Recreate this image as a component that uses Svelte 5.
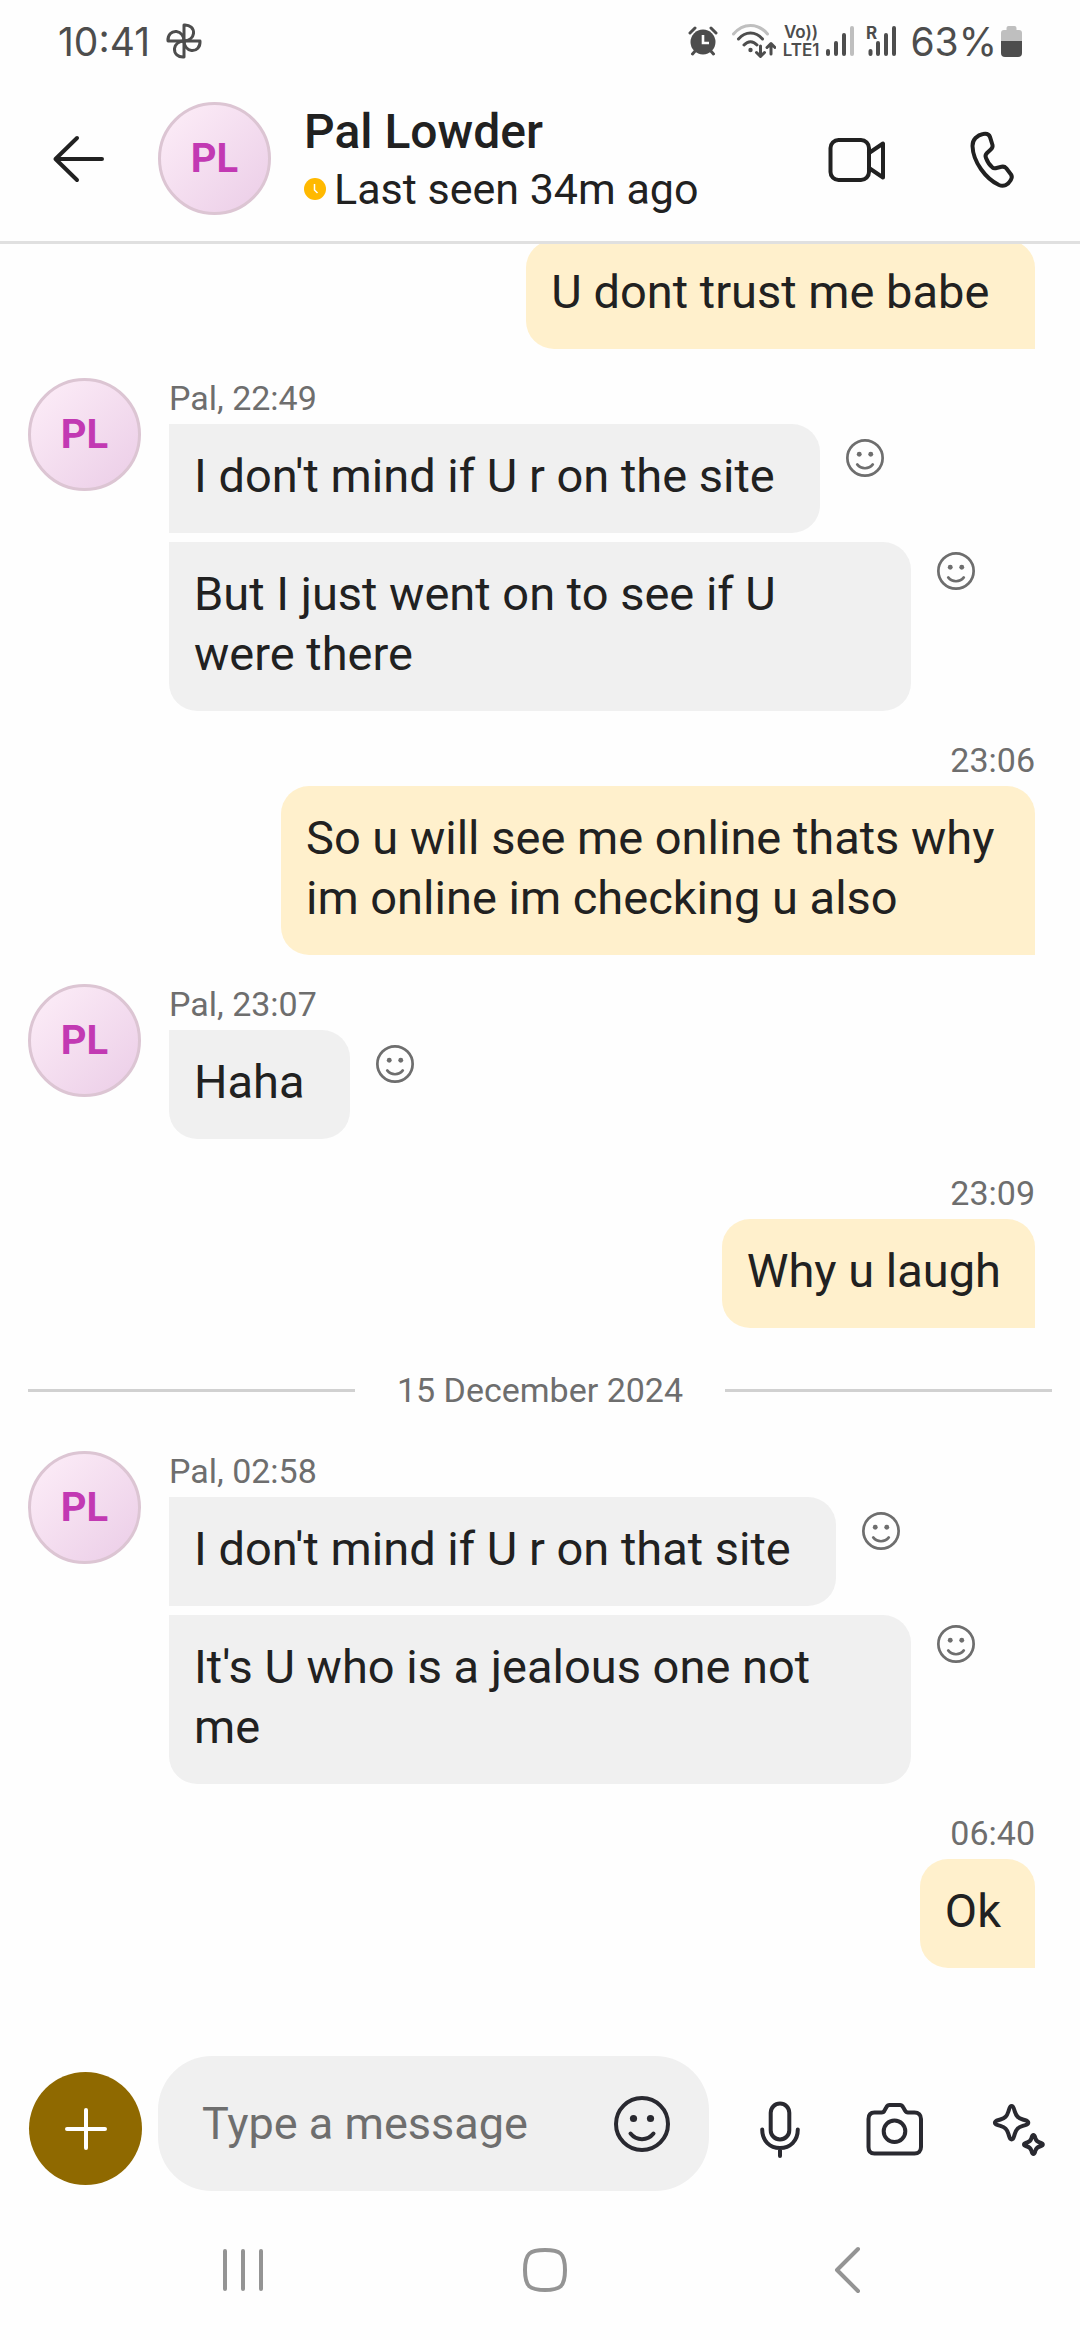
<script>
  let draft = $state('')

  const contact = { name: 'Pal Lowder', initials: 'PL', seen: 'Last seen 34m ago' }

  // '\u00a0' keeps the trailing space people typed
  const thread = [
    { type: 'sent', messages: ['U dont trust me babe\u00a0'] },
    {
      type: 'received',
      meta: 'Pal, 22:49',
      messages: ['I don\'t mind if U r on the site\u00a0', 'But I just went on to see if U were there'],
    },
    { type: 'sent', meta: '23:06', messages: ['So u will see me online thats why im online im checking u also'] },
    { type: 'received', meta: 'Pal, 23:07', messages: ['Haha\u00a0'] },
    { type: 'sent', meta: '23:09', messages: ['Why u laugh'] },
    { type: 'date', label: '15 December 2024' },
    {
      type: 'received',
      meta: 'Pal, 02:58',
      messages: ['I don\'t mind if U r on that site\u00a0', 'It\'s U who is a jealous one not me\u00a0'],
    },
    { type: 'sent', meta: '06:40', messages: ['Ok'] },
  ]
</script>

{#snippet avatar()}
  <div class="avatar">{contact.initials}</div>
{/snippet}

{#snippet smiley(size)}
  <svg class="line" width={size} height={size} viewBox="0 0 56 56">
    <circle cx="28" cy="28" r="26" />
    <path d="M16.5 37.5c6 7.5 17 7.5 23 0" />
    <circle class="dot" cx="19.5" cy="22.5" r="3.6" />
    <circle class="dot" cx="36.5" cy="22.5" r="3.6" />
  </svg>
{/snippet}

<div class="screen">
  <div class="status">
    <span>10:41</span>
    <svg class="line thin" width="36" height="36" viewBox="0 0 36 36">
      <path d="M18 18V2c6-.5 10 3.500 9.500 8.500C27 15 23 18 18 18Z" />
      <path d="M18 18h16c.5 6-3.500 10-8.500 9.500C21 27 18 23 18 18Z" />
      <path d="M18 18v16c-6 .5-10-3.500-9.500-8.500C9 21 13 18 18 18Z" />
      <path d="M18 18H2C1.500 12 5.500 8 10.500 8.500 15 9 18 13 18 18Z" />
    </svg>

    <div class="indicators">
      <svg width="30" height="30" viewBox="0 0 30 30">
        <circle cx="15" cy="16" r="12.500" fill="currentColor" />
        <path d="M2 7l5-5M28 7l-5-5M4.500 28l4-4.500M25.500 28l-4-4.500" stroke="currentColor" stroke-width="3" stroke-linecap="round" />
        <path d="M15 9v8h6" fill="none" stroke="#fff" stroke-width="2.600" />
      </svg>
      <svg class="line thin wifi" width="44" height="36" viewBox="0 0 44 36">
        <path class="faded" d="M1.500 11C11-.5 26-.5 35.500 11" />
        <path d="M6.500 16c7-8 17-8 24 0M12 22c4-4.500 9-4.500 13 0" />
        <circle class="dot" cx="18.500" cy="27" r="2.200" />
        <path d="M28.500 23v10m-4-3.500 4 4 4-4M39 31V21m-4 3.500 4-4 4 4" />
      </svg>
      <div class="volte"><span>Vo))</span><span>LTE1</span></div>
      <svg class="bars" width="28" height="32" viewBox="0 0 28 32">
        <path d="M2 26v3M10 18v11M18 10v19" />
        <path class="faded" d="M26 3v26" />
      </svg>
      <svg class="bars" width="30" height="44" viewBox="0 -6 30 44">
        <text x="0" y="14">R</text>
        <path d="M4.500 26v3M12 18v11M20 10v19M28 3v26" />
      </svg>
      <span class="percent">63%</span>
      <svg width="21" height="32" viewBox="0 0 21 32">
        <path fill="#bfbfbf" d="M0 16V8q0-3 3-3h2.500V3q0-2 2-2h6q2 0 2 2v2H18q3 0 3 3v8Z" />
        <path fill="currentColor" d="M0 16h21v12q0 4-4 4H4q-4 0-4-4Z" />
      </svg>
    </div>
  </div>

  <header>
    <button aria-label="Back">
      <svg class="line" width="68" height="68" viewBox="0 0 68 68">
        <path d="M32 13 10.500 34 32 55M10.500 34H57" />
      </svg>
    </button>
    {@render avatar()}
    <div class="who">
      <h1>{contact.name}</h1>
      <p>
        <svg width="22" height="22" viewBox="0 0 22 22">
          <circle cx="11" cy="11" r="11" fill="#ffb900" />
          <path d="M10.500 6v6l3 3" fill="none" stroke="#fff" stroke-width="1.500" />
        </svg>
        {contact.seen}
      </p>
    </div>
    <div class="calls">
      <button aria-label="Video call">
        <svg class="line" width="68" height="68" viewBox="0 0 68 68">
          <rect x="7.500" y="15" width="38.500" height="40" rx="8" />
          <path d="M46 28l14-9.500v34L46 43" />
        </svg>
      </button>
      <button aria-label="Call">
        <svg class="line" width="68" height="68" viewBox="0 0 68 68">
          <path
            d="M17.500 13C19.500 11 22 9.500 25 9c3.500-.7 6 0 7 3l2.500 8c.5 2-.5 3.500-2 4.800L29 28c-1.500 1.500-2 3-1 5 1.500 4 4 7.500 6.500 9.500 1 1 2.500 1 4 .5l5-1.200c2-.5 3.500 0 4.800 1.500L53 49.500c1.300 1.800 1 3.500-.2 5.500C50 60 45.500 61.800 41 60 28 54 15 37 14.500 21c0-3.500 1-6 3-8Z"
          />
        </svg>
      </button>
    </div>
  </header>

  <main>
    {#each thread as group}
      {#if group.type === 'date'}
        <div class="date"><span>{group.label}</span></div>
      {:else}
        <section class={group.type}>
          {#if group.type === 'received'}
            {@render avatar()}
          {/if}
          <div class="content">
            {#if group.meta}
              <div class="meta">{group.meta}</div>
            {/if}
            <ul>
              {#each group.messages as message}
                <li>
                  <p class="bubble">{message}</p>
                  {#if group.type === 'received'}
                    <button class="react" aria-label="Add reaction">{@render smiley(38)}</button>
                  {/if}
                </li>
              {/each}
            </ul>
          </div>
        </section>
      {/if}
    {/each}
  </main>

  <form class="composer" onsubmit={(e) => e.preventDefault()}>
    <button class="add" type="button" aria-label="Add">
      <svg class="line" width="44" height="44" viewBox="0 0 44 44"><path d="M22 3v38M3 22h38" /></svg>
    </button>
    <div class="field">
      <input type="text" aria-label="Message" placeholder="Type a message" bind:value={draft} />
      <button type="button" aria-label="Emoji">{@render smiley(56)}</button>
    </div>
    <div class="tools">
      <button type="button" aria-label="Voice message">
        <svg class="line" width="68" height="68" viewBox="0 0 68 68">
          <rect x="24.700" y="8.500" width="18.600" height="36" rx="9.300" />
          <path d="M16.200 34.500C16.200 46 24 53 34 53s17.800-7 17.800-18.500M34 53v8" />
        </svg>
      </button>
      <button type="button" aria-label="Camera">
        <svg class="line" width="68" height="68" viewBox="0 0 68 68">
          <path
            d="M13.500 17.500h7c1.500 0 2.500-.7 3-2l2-3.500c.7-1.300 1.700-2 3-2h10.500c1.300 0 2.300.7 3 2l2 3.500c.7 1.300 1.500 2 3 2h6.500c4 0 6.500 2.500 6.500 6.500v28c0 4-2.500 6.500-6.500 6.500h-40C9.500 58.500 7.500 56 7.500 52V24c0-4 2-6.500 6-6.500Z"
          />
          <circle cx="33.500" cy="36.300" r="10.800" />
        </svg>
      </button>
      <button type="button" aria-label="Suggestions">
        <svg class="line" width="77" height="68" viewBox="-9 0 77 68">
          <path
            d="M26.600 11c2 0 2.200 2.500 3.200 5.500 1.600 5 3.200 6.400 8 8 3 1 5.500 1.200 5.500 3.200s-2.500 2.200-5.500 3.200c-4.800 1.600-6.400 3-8 8-1 3-1.200 5.500-3.200 5.500s-2.200-2.500-3.200-5.500c-1.600-5-3.200-6.400-8-8-3-1-5.500-1.200-5.500-3.200s2.500-2.200 5.500-3.200c4.800-1.600 6.400-3 8-8 1-3 1.200-5.500 3.200-5.500Z"
          />
          <path
            d="M48.400 40.100c1.200 0 1.400 1.400 2 3.200.8 2.400 1.800 3.400 4.200 4.200 1.800.6 3.200.8 3.200 2s-1.400 1.400-3.200 2c-2.400.8-3.400 1.800-4.200 4.200-.6 1.800-.8 3.200-2 3.200s-1.400-1.400-2-3.200c-.8-2.400-1.800-3.400-4.200-4.200-1.800-.6-3.200-.8-3.200-2s1.400-1.400 3.200-2c2.400-.8 3.400-1.800 4.200-4.200.6-1.800.8-3.200 2-3.200Z"
          />
        </svg>
      </button>
    </div>
  </form>

  <nav>
    <button aria-label="Recent apps">
      <svg class="line" width="48" height="48" viewBox="0 0 48 48"><path d="M6 5v38M24 5v38M42 5v38" /></svg>
    </button>
    <button aria-label="Home">
      <svg class="line" width="48" height="48" viewBox="0 0 48 48">
        <path d="M24 4c15 0 20 3 20 20s-5 20-20 20S4 41 4 24 9 4 24 4Z" />
      </svg>
    </button>
    <button aria-label="Back">
      <svg class="line" width="48" height="48" viewBox="0 0 48 48"><path d="M35 3 14 24l21 21" /></svg>
    </button>
  </nav>
</div>

<style>
  :global(body) {
    background: #fefefe;
  }

  .screen {
    display: flex;
    flex-direction: column;
    height: 100vh;
    color: #212121;
    font-family: Roboto, sans-serif;
    & h1,
    & p,
    & ul {
      margin: 0;
      padding: 0;
    }
    & svg {
      display: block;
      flex: none;
    }
  }

  button {
    display: flex;
    align-items: center;
    justify-content: center;
    padding: 0;
    border: none;
    background: none;
    color: inherit;
    cursor: pointer;
  }

  .line {
    fill: none;
    stroke: currentColor;
    stroke-width: 4;
    stroke-linecap: round;
    stroke-linejoin: round;
  }
  .thin {
    stroke-width: 3;
  }
  .dot {
    fill: currentColor;
    stroke: none;
  }
  .faded {
    stroke: #bfbfbf;
  }

  .status {
    display: flex;
    align-items: center;
    gap: 16px;
    height: 82px;
    padding: 0 58px;
    color: #4d4d4d;
    font-family: Inter, sans-serif;
    font-size: 39px;
    font-weight: 400;
  }
  .indicators {
    display: flex;
    align-items: center;
    gap: 12px;
    margin-left: auto;
  }
  .wifi {
    margin-left: 2px;
  }
  .volte {
    display: flex;
    flex-direction: column;
    align-items: center;
    margin: 0 -5px;
    font-size: 17px;
    font-weight: 600;
    line-height: 18px;
  }
  .bars {
    fill: currentColor;
    font-size: 17px;
    font-weight: 700;
    & path {
      stroke: currentColor;
      stroke-width: 4;
      stroke-linecap: round;
    }
    & .faded {
      stroke: #bfbfbf;
    }
  }
  .percent {
    margin: 0 -8px 0 2px;
  }

  header {
    display: flex;
    align-items: center;
    height: 153px;
    padding: 0 54px 6px 45px;
    border-bottom: 3px solid #e0e0e0;
    & .avatar {
      margin-left: 45px;
    }
  }
  .who {
    flex: 1;
    margin-left: 33px;
    & h1 {
      font-size: 48px;
      font-weight: 500;
      line-height: 60px;
    }
    & p {
      display: flex;
      align-items: center;
      gap: 8px;
      font-size: 43px;
      line-height: 54px;
    }
  }
  .calls {
    display: flex;
    gap: 67px;
  }

  .avatar {
    flex: none;
    display: flex;
    align-items: center;
    justify-content: center;
    box-sizing: border-box;
    width: 113px;
    height: 113px;
    border: 3px solid #dcc5d3;
    border-radius: 50%;
    background: linear-gradient(135deg, #fdeef8, #ebcde7);
    color: #c239b3;
    font-size: 40px;
    font-weight: 700;
  }

  /* pinned to the newest message, older ones slide under the header */
  main {
    flex: 1;
    display: flex;
    flex-direction: column;
    justify-content: flex-end;
    min-height: 0;
    padding-bottom: 88px;
    overflow: hidden;
  }
  section {
    display: flex;
    flex: none;
    margin-top: 29px;
    padding: 0 45px 0 28px;
  }
  .content {
    flex: 1;
  }
  .meta,
  .date {
    color: #6e6e6e;
    font-size: 34px;
    line-height: 40px;
  }
  .meta {
    padding-bottom: 6px;
  }
  ul {
    display: flex;
    flex-direction: column;
    gap: 4px;
    list-style: none;
  }
  li {
    display: flex;
    align-items: flex-start;
  }
  .bubble {
    box-sizing: border-box;
    max-width: 742px;
    font-size: 47px;
    line-height: 60px;
    .screen & {
      padding: 22px 34px 27px 25px;
    }
  }

  .received {
    gap: 28px;
    & li {
      min-height: 114px;
    }
    & .bubble {
      border-radius: 0 28px 28px 0;
      background: #f0f0f0;
    }
    & li:last-child .bubble {
      border-bottom-left-radius: 28px;
    }
  }
  .react {
    margin: 10px 0 0 26px;
    color: #6e6e6e;
    li:first-child & {
      margin-top: 15px;
    }
  }

  .sent {
    & .meta {
      text-align: right;
    }
    & li {
      justify-content: flex-end;
    }
    & .bubble {
      max-width: 754px;
      border-radius: 28px 28px 0 28px;
      background: #fff0cc;
    }
  }

  .date {
    display: flex;
    align-items: center;
    gap: 42px;
    margin: 42px 28px 12px;
    &::before,
    &::after {
      content: '';
      flex: 1;
      height: 3px;
      background: #d1d1d1;
    }
  }

  .composer {
    display: flex;
    align-items: flex-end;
    padding: 0 27px 0 29px;
    color: #292930;
  }
  .add {
    width: 113px;
    height: 113px;
    margin: 0 16px 6px 0;
    border-radius: 50%;
    background: #8f6900;
    color: #fff;
  }
  .field {
    flex: 1;
    display: flex;
    align-items: center;
    box-sizing: border-box;
    height: 135px;
    min-width: 0;
    padding: 0 39px 0 44px;
    border-radius: 54px;
    background: #f0f0f0;
  }
  input {
    flex: 1;
    min-width: 0;
    padding: 0;
    border: none;
    outline: none;
    background: none;
    color: #212121;
    font-family: inherit;
    font-size: 45px;
    line-height: 56px;
    &::placeholder {
      color: #6e6e6e;
      opacity: 1;
    }
  }
  .tools {
    display: flex;
    gap: 47px;
    margin: 0 0 6px 37px;
    & button {
      height: 113px;
    }
  }

  nav {
    display: grid;
    grid-template-columns: repeat(3, 1fr);
    height: 140px;
    margin-top: 9px;
    padding: 0 82px 0 92px;
    color: #949494;
    & button {
      height: 140px;
    }
  }
</style>
